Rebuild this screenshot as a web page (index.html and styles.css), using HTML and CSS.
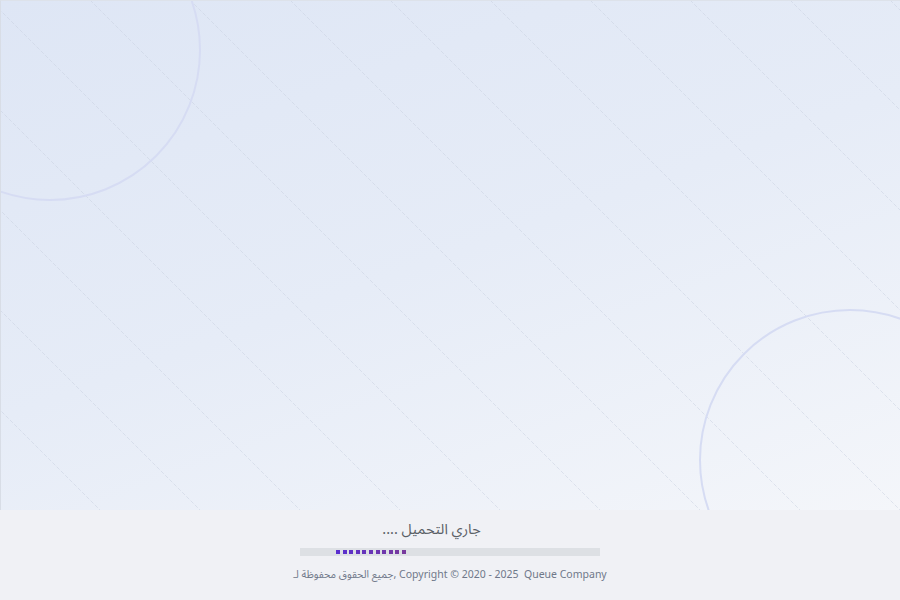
FILE: index.html
```html
<!DOCTYPE html>
<html lang="ar">
<head>
<meta charset="utf-8">
<title>Queue Company</title>
<link rel="stylesheet" href="styles.css">
</head>
<body>
<div class="page">
  <div class="stage">
    <svg class="deco" width="900" height="510" viewBox="0 0 900 510" aria-hidden="true">
      <g class="lines">
        <line x1="-610" y1="0" x2="-100" y2="510"/>
        <line x1="-510" y1="0" x2="0" y2="510"/>
        <line x1="-410" y1="0" x2="100" y2="510"/>
        <line x1="-310" y1="0" x2="200" y2="510"/>
        <line x1="-210" y1="0" x2="300" y2="510"/>
        <line x1="-110" y1="0" x2="400" y2="510"/>
        <line x1="-10" y1="0" x2="500" y2="510"/>
        <line x1="90" y1="0" x2="600" y2="510"/>
        <line x1="190" y1="0" x2="700" y2="510"/>
        <line x1="290" y1="0" x2="800" y2="510"/>
        <line x1="390" y1="0" x2="900" y2="510"/>
        <line x1="490" y1="0" x2="1000" y2="510"/>
        <line x1="590" y1="0" x2="1100" y2="510"/>
        <line x1="690" y1="0" x2="1200" y2="510"/>
        <line x1="790" y1="0" x2="1300" y2="510"/>
        <line x1="890" y1="0" x2="1400" y2="510"/>
      </g>
      <circle class="ring" cx="50" cy="50" r="150"/>
      <circle class="ring" cx="850" cy="460" r="150"/>
    </svg>
  </div>
  <div class="footer">
    <div class="loading">جاري التحميل ....</div>
    <div class="bar">
      <div class="dots">
        <span class="dot" style="background:#5a2fcf"></span>
        <span class="dot" style="background:#5c30ca"></span>
        <span class="dot" style="background:#5f31c5"></span>
        <span class="dot" style="background:#6232c0"></span>
        <span class="dot" style="background:#6533bb"></span>
        <span class="dot" style="background:#6834b6"></span>
        <span class="dot" style="background:#6b35b1"></span>
        <span class="dot" style="background:#6e36ac"></span>
        <span class="dot" style="background:#7137a7"></span>
        <span class="dot" style="background:#7438a2"></span>
        <span class="dot" style="background:#77399d"></span>
      </div>
    </div>
    <div class="copy" dir="ltr">جميع الحقوق محفوظة لـ, Copyright © 2020 - 2025&nbsp; Queue Company</div>
  </div>
</div>
</body>
</html>
```
FILE: styles.css
```css
html, body {
  margin: 0;
  padding: 0;
}
body {
  width: 900px;
  height: 600px;
  overflow: hidden;
  background: #f0f1f5;
  font-family: "Noto Sans Arabic", "DejaVu Sans", "Open Sans", sans-serif;
}
.page {
  display: flex;
  flex-direction: column;
  width: 900px;
  height: 600px;
}
.stage {
  position: relative;
  height: 510px;
  box-sizing: border-box;
  border-top: 1px solid #dde2ea;
  border-left: 1px solid #d8dde6;
  background: linear-gradient(160deg, #dee6f5 0%, #e6ecf7 50%, #f4f6fa 100%);
  overflow: hidden;
}
.deco {
  position: absolute;
  left: -1px;
  top: -1px;
}
.lines line {
  stroke: #c8d0e0;
  stroke-width: 1;
  stroke-dasharray: 4 2;
  opacity: 0.5;
}
.ring {
  fill: none;
  stroke: #d6dcf3;
  stroke-width: 2;
}
.footer {
  flex: 1;
  display: flex;
  flex-direction: column;
  align-items: center;
  background: #f0f1f5;
}
.loading {
  margin-top: 9px;
  margin-right: 37px;
  font-size: 14.5px;
  line-height: 22px;
  color: #5a5f66;
  direction: rtl;
}
.bar {
  margin-top: 7px;
  width: 300px;
  height: 8px;
  background: #dde0e4;
  display: flex;
  align-items: center;
}
.dots {
  display: flex;
  gap: 2.6px;
  margin-left: 36px;
}
.dot {
  width: 4px;
  height: 4px;
}
.copy {
  margin-top: 12px;
  font-size: 10.5px;
  line-height: 14px;
  color: #6f7889;
  white-space: nowrap;
}
```
